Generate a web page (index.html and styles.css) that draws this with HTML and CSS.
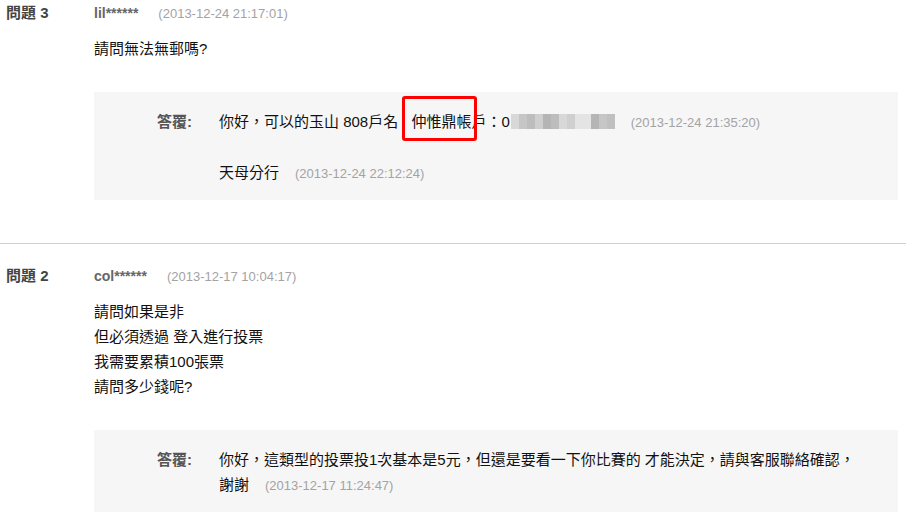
FILE: index.html
```html
<!DOCTYPE html>
<html lang="zh-Hant">
<head>
<meta charset="utf-8">
<title>問答</title>
<link rel="stylesheet" href="styles.css">
</head>
<body>
<div class="qa-list">
  <div class="qa qa-first">
    <div class="qa-head">
      <span class="qa-no">問題 3</span>
      <span class="qa-user">lil******</span>
      <span class="qa-date">(2013-12-24 21:17:01)</span>
    </div>
    <div class="qa-body">
      <p class="qa-line">請問無法無郵嗎?</p>
    </div>
    <div class="answer">
      <div class="answer-label">答覆:</div>
      <div class="answer-list">
        <div class="reply">你好，可以的玉山 808戶名 <span class="mark">仲惟鼎帳戶</span>：0<span class="blur"><i class="b1"></i><i class="b2"></i><i class="b3"></i><i class="b4"></i><i class="b5"></i><i class="b3"></i><i class="b1"></i><i class="b4"></i><i class="b6"></i><i class="b5"></i><i class="b2"></i><i class="b7"></i></span><span class="reply-date">(2013-12-24 21:35:20)</span></div>
        <div class="reply">天母分行<span class="reply-date">(2013-12-24 22:12:24)</span></div>
      </div>
    </div>
  </div>
  <div class="qa qa-last">
    <div class="qa-head">
      <span class="qa-no">問題 2</span>
      <span class="qa-user">col******</span>
      <span class="qa-date">(2013-12-17 10:04:17)</span>
    </div>
    <div class="qa-body">
      <p class="qa-line">請問如果是非</p>
      <p class="qa-line">但必須透過 登入進行投票</p>
      <p class="qa-line">我需要累積100張票</p>
      <p class="qa-line">請問多少錢呢?</p>
    </div>
    <div class="answer">
      <div class="answer-label">答覆:</div>
      <div class="answer-list">
        <div class="reply">你好，這類型的投票投1次基本是5元，但還是要看一下你比賽的 才能決定，請與客服聯絡確認，謝謝<span class="reply-date">(2013-12-17 11:24:47)</span></div>
      </div>
    </div>
  </div>
</div>
</body>
</html>
```
FILE: styles.css
```css
html, body {
  margin: 0;
  padding: 0;
  background: #fff;
}
body {
  font-family: "Liberation Sans", "Noto Sans CJK TC", Arial, sans-serif;
  font-size: 15px;
  color: #111;
  line-height: 25px;
  width: 906px;
  height: 518px;
  overflow: hidden;
}
.qa {
  padding: 19px 8px 43px 0;
  border-bottom: 1px solid #cfcfcf;
}
.qa-first {
  padding-top: 0;
}
.qa-last {
  padding-bottom: 8px;
  border-bottom: 0;
}
.qa-head {
  display: flex;
  align-items: baseline;
  height: 25px;
}
.qa-no {
  width: 88px;
  padding-left: 6px;
  font-weight: bold;
  font-size: 15px;
  color: #444;
}
.qa-user {
  font-weight: bold;
  font-size: 14px;
  color: #666;
  margin-right: 20px;
}
.qa-date {
  font-size: 13px;
  color: #a3a3a3;
}
.qa-body {
  margin: 11px 0 31px 94px;
}
.qa-line {
  margin: 0;
}
.answer {
  margin-left: 94px;
  background: #f6f6f6;
  display: flex;
  padding: 17px 40px 14px 63px;
}
.answer-label {
  width: 62px;
  flex: none;
  font-weight: bold;
  color: #555;
}
.answer-list {
  flex: 1;
  display: flex;
  flex-direction: column;
  gap: 25px;
}
.reply-date {
  display: inline-block;
  font-size: 13px;
  color: #a3a3a3;
  margin-left: 16px;
}
.mark {
  position: relative;
  margin-left: 9px;
}
.mark::before {
  content: "";
  position: absolute;
  left: -9px;
  top: -17px;
  width: 75px;
  height: 45px;
  box-sizing: border-box;
  border: 3px solid #f00;
  border-radius: 3px;
}
.blur {
  display: inline-flex;
  vertical-align: middle;
  height: 15px;
  margin-left: 1px;
  margin-top: -3px;
}
.blur i {
  display: block;
  width: 8px;
  height: 15px;
}
.blur .b1 { background: #d8d8d8; }
.blur .b2 { background: #c6c6c6; }
.blur .b3 { background: #bdbdbd; }
.blur .b4 { background: #cfcfcf; }
.blur .b5 { background: #b5b5b5; }
.blur .b6 { background: #e4e4e4; width: 16px; }
.blur .b7 { background: #c0c0c0; }
```
